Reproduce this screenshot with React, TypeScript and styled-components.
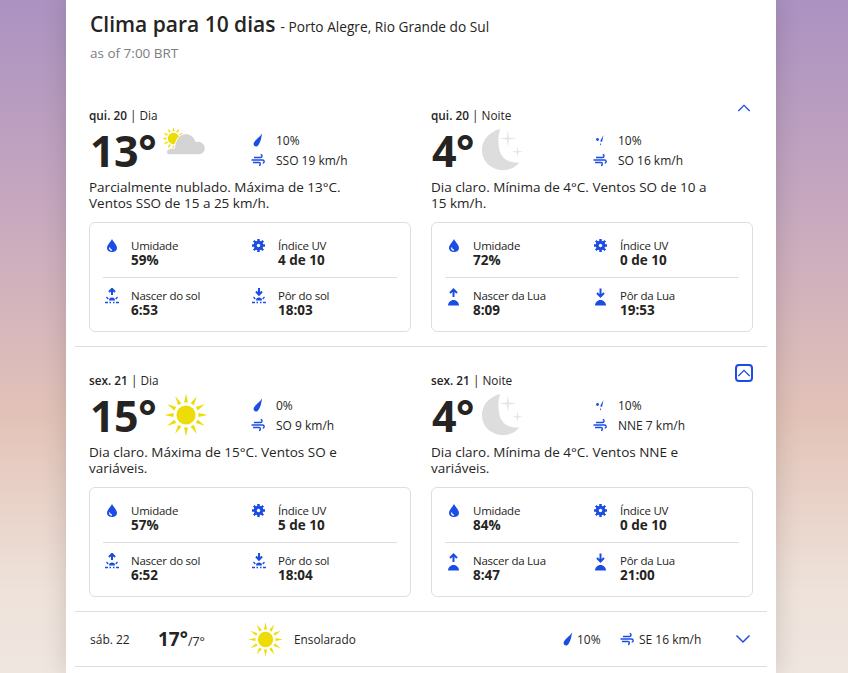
import React from "react";
import styled, { createGlobalStyle } from "styled-components";

const GlobalStyle = createGlobalStyle`
	html, body {
		margin: 0;
		padding: 0;
		height: 100%;
		overflow: hidden;
	}
	body {
		font-family: "Open Sans", "Noto Sans", "Liberation Sans", sans-serif;
		color: #252422;
		background: linear-gradient(180deg, #ab92c1 0%, #c6a7bf 30%, #e3c3b8 62%, #eee2da 88%, #f0e6e0 100%);
	}
`;

const Page = styled.main`
	height: 673px;
	overflow: hidden;
	padding-left: 66px;
`;

const Card = styled.div`
	width: 710px;
	height: 673px;
	overflow: hidden;
	background: #fff;
	box-shadow: 0 0 24px 0 rgba(0, 0, 0, 0.15);
`;

const Header = styled.header`
	height: 82px;
	padding: 10px 0 0 24px;
	box-sizing: border-box;
`;

const TitleRow = styled.div`
	display: flex;
	align-items: baseline;
	gap: 5px;
	height: 28px;
	line-height: 28px;
`;

const Title = styled.h1`
	margin: 0;
	font-size: 21px;
	font-weight: 600;
`;

const Location = styled.span`
	font-size: 13.7px;
`;

const Stamp = styled.div`
	margin-top: 7px;
	font-size: 13.5px;
	line-height: 16px;
	color: #7c7e82;
`;

const Section = styled.section`
	margin: 0 9px;
	padding: 25px 14px 14px;
	display: grid;
	grid-template-columns: 322px 322px;
	column-gap: 20px;
	border-bottom: 1px solid #dedede;
`;

const Column = styled.div`
	min-width: 0;
`;

const LabelRow = styled.div`
	display: flex;
	justify-content: space-between;
	align-items: flex-start;
	height: 16px;
`;

const DayLabel = styled.div`
	font-size: 11.8px;
	line-height: 16px;
	b {
		font-weight: 600;
	}
`;

const Toggle = styled.button<{ $focused?: boolean }>`
	width: 18px;
	height: 18px;
	margin-top: -8px;
	padding: 0;
	display: flex;
	align-items: center;
	justify-content: center;
	background: transparent;
	border: 2px solid ${(p) => (p.$focused ? "#1b4de4" : "transparent")};
	border-radius: 4px;
	color: #1b4de4;
`;

const Summary = styled.div`
	display: grid;
	grid-template-columns: 162px 1fr;
	height: 44px;
	margin-top: 6px;
`;

const TempWrap = styled.div`
	display: flex;
	align-items: center;
`;

const Temp = styled.span`
	font-size: 43px;
	line-height: 44px;
	font-weight: 700;
	letter-spacing: -0.5px;
	margin-left: 1px;
`;

const BigIcon = styled.svg`
	width: 46px;
	height: 46px;
	flex: none;
	margin-left: 7px;
	margin-top: -3px;
`;

const StatList = styled.div`
	display: flex;
	flex-direction: column;
	padding-top: 1px;
`;

const Stat = styled.div`
	display: flex;
	align-items: center;
	gap: 11px;
	height: 20px;
	font-size: 12px;
`;

const StatIcon = styled.svg`
	width: 14px;
	height: 14px;
	flex: none;
	color: #1b4de4;
`;

const Description = styled.p`
	margin: 6px 0 0;
	width: 290px;
	font-size: 13.5px;
	line-height: 16px;
	height: 32px;
`;

const DetailBox = styled.div`
	margin-top: 11px;
	height: 110px;
	box-sizing: border-box;
	padding: 8px 13px 0;
	border: 1px solid #dedede;
	border-radius: 6px;
`;

const DetailRow = styled.div<{ $divided?: boolean }>`
	display: grid;
	grid-template-columns: 147px 147px;
	box-sizing: border-box;
	height: ${(p) => (p.$divided ? "50px" : "46px")};
	padding-top: ${(p) => (p.$divided ? "10px" : "7px")};
	border-top: ${(p) => (p.$divided ? "1px solid #dedede" : "0")};
`;

const Detail = styled.div`
	display: flex;
	gap: 11px;
	padding-left: 1px;
`;

const DetailIcon = styled.svg`
	width: 16px;
	height: 18px;
	flex: none;
	color: #1b4de4;
`;

const DetailText = styled.div`
	display: flex;
	flex-direction: column;
`;

const DetailName = styled.span`
	font-size: 11.5px;
	letter-spacing: -0.25px;
	line-height: 15px;
`;

const DetailValue = styled.span`
	font-size: 13.5px;
	line-height: 15px;
	font-weight: 700;
`;

const DayRow = styled.div`
	margin: 0 9px;
	height: 54px;
	display: flex;
	align-items: center;
	padding: 0 16px 0 15px;
	border-bottom: 1px solid #dedede;
`;

const DayName = styled.span`
	width: 68px;
	font-size: 12px;
`;

const DayTemp = styled.span`
	width: 89px;
	font-size: 12.5px;
	b {
		font-size: 19px;
		font-weight: 700;
	}
`;

const DaySun = styled.svg`
	width: 37px;
	height: 37px;
	flex: none;
`;

const Phrase = styled.span`
	margin-left: 10px;
	width: 267px;
	font-size: 11.8px;
`;

const DayStat = styled.span<{ $width: number; $gap: number }>`
	display: flex;
	align-items: center;
	gap: ${(p) => p.$gap}px;
	width: ${(p) => p.$width}px;
	font-size: 12px;
`;

const DayChevron = styled.span`
	display: flex;
	margin-left: auto;
	color: #1b4de4;
`;

const Chevron = ({ up }: { up?: boolean }) => (
	<svg width="16" height="10" viewBox="0 0 16 10">
		<path d={up ? "M1.5 8.5 8 2l6.5 6.5" : "M1.5 1.5 8 8l6.5-6.5"} fill="none" stroke="currentColor" strokeWidth="1.5" />
	</svg>
);

const SunShape = ({ cx = 24, cy = 24, r = 10, a = 13, b = 22.5, w = 2 }) => (
	<g>
		{Array.from({ length: 12 }, (_, i) => (
			<path
				key={i}
				d={`M${cx - w} ${cy - a}L${cx} ${cy - b}L${cx + w} ${cy - a}Z`}
				fill="#eedc06"
				transform={`rotate(${i * 30} ${cx} ${cy})`}
			/>
		))}
		<circle cx={cx} cy={cy} r={r} fill="#eedc06" />
	</g>
);

const SunIcon = () => (
	<BigIcon viewBox="0 0 48 48">
		<SunShape />
	</BigIcon>
);

const PartlyCloudy = () => (
	<BigIcon viewBox="0 0 48 48">
		<SunShape cx={11} cy={12} r={6} a={7.5} b={12} w={1.2} />
		<path
			d="M7 29C4 29 3 26 4 25C6 22 9 22 12 22C13 12 18 7 24 7C29 7 33 11 34 15C40 14 44 18 44 22C44 26 41 29 37 29Z"
			fill="#d4d4d4"
			stroke="#fff"
			strokeWidth="1"
		/>
	</BigIcon>
);

const MoonIcon = () => (
	<BigIcon viewBox="0 0 48 48">
		<path d="M20 2C8 5 1 14 1 24c0 12 10 21 22 21 7 0 13-3 17-8-11 1-19-4-21-14-1.500-8-1-15 1-21Z" fill="#dddddd" />
		<path d="M28 3l1 8 8 1-8 1-1 8-1-8-8-1 8-1Z" fill="#e4e4e4" />
		<path d="M38 20l.8 5 5.200.8-5.200.8-.8 5-.8-5-5.200-.8 5.200-.8Z" fill="#e4e4e4" />
	</BigIcon>
);

const DropIcon = ({ small }: { small?: boolean }) => (
	<StatIcon viewBox="0 0 14 14">
		{small ? (
			<g fill="currentColor">
				<path d="M10.500 2 7.500 7.500c-.5 1.200 1 1.800 1.700.8Z" />
				<circle cx="4.5" cy="6.5" r="1.400" />
				<path d="M8 9.500 7 12l1 .2Z" />
			</g>
		) : (
			<path d="M11 0.500C9.500 3.500 5 6 3 9.500 1.500 12.500 4.500 14.500 6.500 13 9 11 10.500 5 11 0.500Z" fill="currentColor" />
		)}
	</StatIcon>
);

const WindIcon = () => (
	<StatIcon viewBox="0 0 14 14">
		<path
			d="M3 4.500h6.500c2 0 2-3 .2-3M0.500 7h11c2.200 0 2.200 3 .2 3M2 9.500h6c1.800 0 1.800 3 0 3"
			fill="none"
			stroke="currentColor"
			strokeWidth="1.400"
		/>
	</StatIcon>
);

const HumidityIcon = () => (
	<DetailIcon viewBox="0 0 16 18">
		<path d="M8 1C6.500 4 3 7 3 10c0 2.500 2.200 4 5 4s5-1.500 5-4c0-3-3.500-6-5-9Z" fill="currentColor" />
		<path d="M5.500 9.500c0 1.500 1 2.500 2.500 2.700" fill="none" stroke="#fff" strokeWidth="1.200" />
	</DetailIcon>
);

const UvIcon = () => (
	<DetailIcon viewBox="0 0 16 18">
		<g fill="currentColor">
			{Array.from({ length: 8 }, (_, i) => (
				<rect key={i} x="6.500" y="1" width="2" height="13" transform={`rotate(${i * 45} 7.500 7.500)`} />
			))}
			<circle cx="7.5" cy="7.5" r="4.800" />
		</g>
		<circle cx="7.5" cy="7.5" r="1.700" fill="#fff" />
	</DetailIcon>
);

const SunRiseIcon = ({ down }: { down?: boolean }) => (
	<DetailIcon viewBox="0 0 16 18">
		<path d={down ? "M8 0v6M5 3.500 8 6.700l3-3.200" : "M8 7V1.500M5 4 8 0.800 11 4"} fill="none" stroke="currentColor" strokeWidth="2" />
		<path d="M5 12.500a3 3 0 0 1 6 0Z" fill="currentColor" />
		<path
			d="M1 14.500h3M5.500 14.500h1.500M9 14.500h1.500M12 14.500h3M2.500 9 4.300 11M13.500 9 11.700 11"
			fill="none"
			stroke="currentColor"
			strokeWidth="1.300"
		/>
	</DetailIcon>
);

const MoonRiseIcon = ({ down }: { down?: boolean }) => (
	<DetailIcon viewBox="0 0 16 18">
		<path d={down ? "M7.500 0.500V8M4 5 7.500 8.500 11 5" : "M7.500 9V1.500M4 5 7.500 1.500 11 5"} fill="none" stroke="currentColor" strokeWidth="2" />
		<path d="M2 17.500C2 14.500 4.500 12 7.500 12s5.500 2.500 5.500 5.500Z" fill="currentColor" />
	</DetailIcon>
);

interface DetailData {
	name: string;
	value: string;
	icon: React.ReactNode;
}

interface PartData {
	day: string;
	part: string;
	temp: string;
	icon: React.ReactNode;
	dropSmall?: boolean;
	precip: string;
	wind: string;
	text: string;
	details: DetailData[];
	toggle?: "plain" | "focused";
}

const dayDetails = (hum: string, uv: string, rise: string, set: string): DetailData[] => [
	{ name: "Umidade", value: hum, icon: <HumidityIcon /> },
	{ name: "Índice UV", value: uv, icon: <UvIcon /> },
	{ name: "Nascer do sol", value: rise, icon: <SunRiseIcon /> },
	{ name: "Pôr do sol", value: set, icon: <SunRiseIcon down /> },
];

const nightDetails = (hum: string, uv: string, rise: string, set: string): DetailData[] => [
	{ name: "Umidade", value: hum, icon: <HumidityIcon /> },
	{ name: "Índice UV", value: uv, icon: <UvIcon /> },
	{ name: "Nascer da Lua", value: rise, icon: <MoonRiseIcon /> },
	{ name: "Pôr da Lua", value: set, icon: <MoonRiseIcon down /> },
];

const sections: PartData[][] = [
	[
		{
			day: "qui. 20",
			part: "Dia",
			temp: "13°",
			icon: <PartlyCloudy />,
			precip: "10%",
			wind: "SSO 19 km/h",
			text: "Parcialmente nublado. Máxima de 13°C. Ventos SSO de 15 a 25 km/h.",
			details: dayDetails("59%", "4 de 10", "6:53", "18:03"),
		},
		{
			day: "qui. 20",
			part: "Noite",
			temp: "4°",
			icon: <MoonIcon />,
			dropSmall: true,
			precip: "10%",
			wind: "SO 16 km/h",
			text: "Dia claro. Mínima de 4°C. Ventos SO de 10 a 15 km/h.",
			details: nightDetails("72%", "0 de 10", "8:09", "19:53"),
			toggle: "plain",
		},
	],
	[
		{
			day: "sex. 21",
			part: "Dia",
			temp: "15°",
			icon: <SunIcon />,
			precip: "0%",
			wind: "SO 9 km/h",
			text: "Dia claro. Máxima de 15°C. Ventos SO e variáveis.",
			details: dayDetails("57%", "5 de 10", "6:52", "18:04"),
		},
		{
			day: "sex. 21",
			part: "Noite",
			temp: "4°",
			icon: <MoonIcon />,
			dropSmall: true,
			precip: "10%",
			wind: "NNE 7 km/h",
			text: "Dia claro. Mínima de 4°C. Ventos NNE e variáveis.",
			details: nightDetails("84%", "0 de 10", "8:47", "21:00"),
			toggle: "focused",
		},
	],
];

const DetailCells: React.FC<{ items: DetailData[] }> = ({ items }) => (
	<>
		{items.map((d) => (
			<Detail key={d.name}>
				{d.icon}
				<DetailText>
					<DetailName>{d.name}</DetailName>
					<DetailValue>{d.value}</DetailValue>
				</DetailText>
			</Detail>
		))}
	</>
);

const DayPart: React.FC<{ data: PartData }> = ({ data }) => (
	<Column>
		<LabelRow>
			<DayLabel>
				<b>{data.day}</b> | {data.part}
			</DayLabel>
			{data.toggle && (
				<Toggle $focused={data.toggle === "focused"} aria-label="Recolher">
					<Chevron up />
				</Toggle>
			)}
		</LabelRow>
		<Summary>
			<TempWrap>
				<Temp>{data.temp}</Temp>
				{data.icon}
			</TempWrap>
			<StatList>
				<Stat>
					<DropIcon small={data.dropSmall} />
					{data.precip}
				</Stat>
				<Stat>
					<WindIcon />
					{data.wind}
				</Stat>
			</StatList>
		</Summary>
		<Description>{data.text}</Description>
		<DetailBox>
			<DetailRow>
				<DetailCells items={data.details.slice(0, 2)} />
			</DetailRow>
			<DetailRow $divided>
				<DetailCells items={data.details.slice(2)} />
			</DetailRow>
		</DetailBox>
	</Column>
);

export default function App() {
	return (
		<Page>
			<GlobalStyle />
			<Card>
				<Header>
					<TitleRow>
						<Title>Clima para 10 dias</Title>
						<Location>- Porto Alegre, Rio Grande do Sul</Location>
					</TitleRow>
					<Stamp>as of 7:00 BRT</Stamp>
				</Header>
				{sections.map((parts) => (
					<Section key={parts[0].day}>
						{parts.map((p) => (
							<DayPart key={p.part} data={p} />
						))}
					</Section>
				))}
				<DayRow>
					<DayName>sáb. 22</DayName>
					<DayTemp>
						<b>17°</b>/7°
					</DayTemp>
					<DaySun viewBox="0 0 48 48">
						<SunShape />
					</DaySun>
					<Phrase>Ensolarado</Phrase>
					<DayStat $width={59} $gap={2}>
						<DropIcon />
						10%
					</DayStat>
					<DayStat $width={90} $gap={5}>
						<WindIcon />
						SE 16 km/h
					</DayStat>
					<DayChevron>
						<Chevron />
					</DayChevron>
				</DayRow>
			</Card>
		</Page>
	);
}
